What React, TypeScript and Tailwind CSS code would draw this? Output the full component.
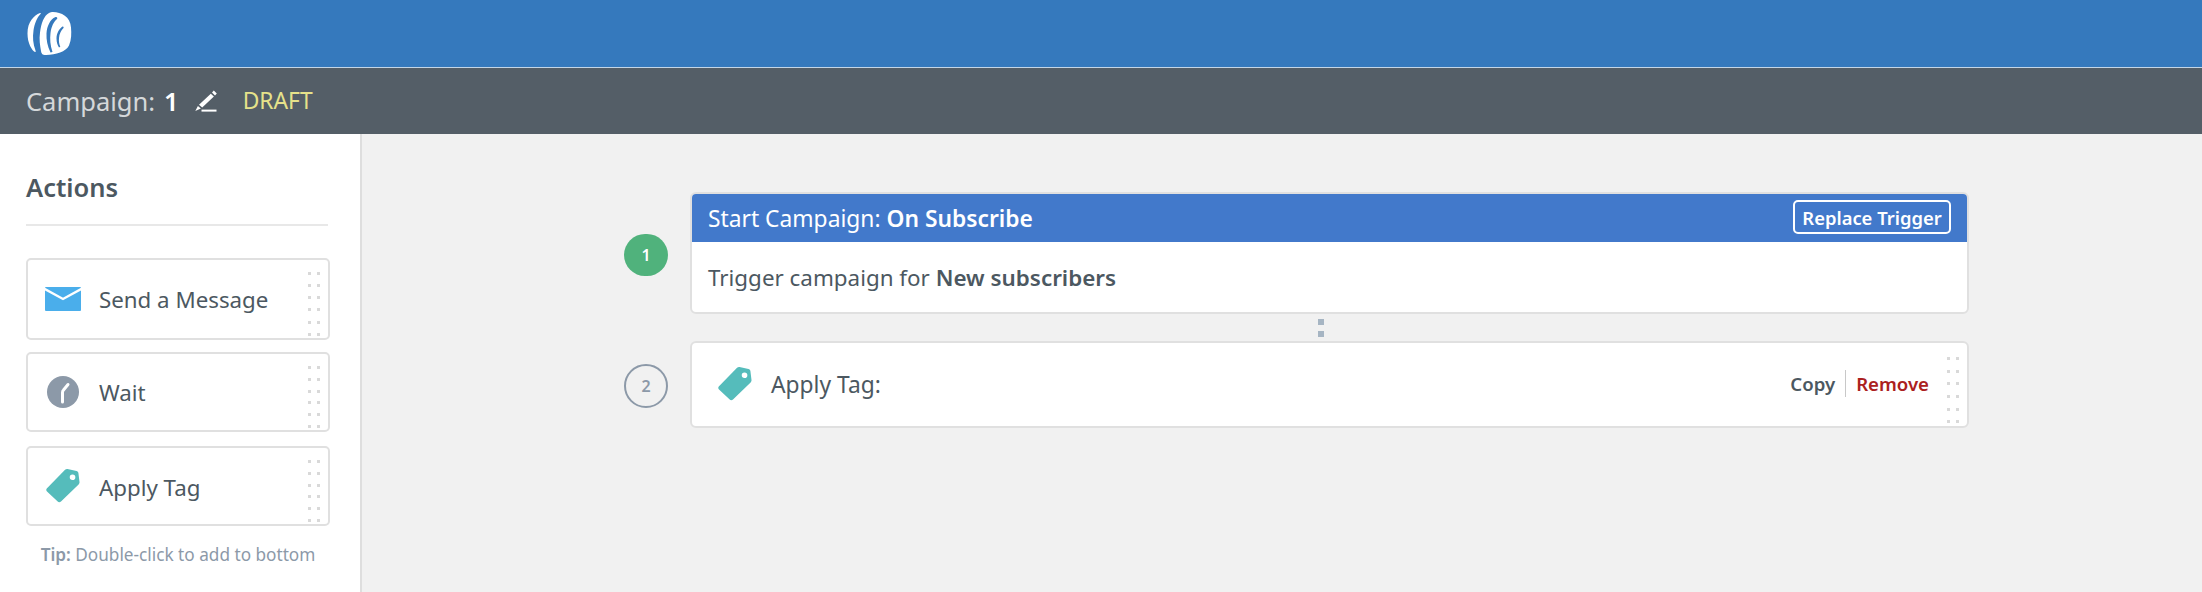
import React from "react";

function Dots({ className = "" }: { className?: string }) {
  return (
    <div className={"grid grid-cols-2 gap-x-[6px] gap-y-[7px] w-[12px] shrink-0 " + className}>
      {Array.from({ length: 12 }).map((_, i) => (
        <div key={i} className="w-[3px] h-[3px] bg-[#d9d9d9]" />
      ))}
    </div>
  );
}

function Logo() {
  return (
    <svg width="46" height="47" viewBox="0 0 46 46" className="block">
      <path d="M14 1.5 C8 4 1.5 10 1.5 22 C1.5 32 6 39 9 40.5 C9.5 40.5 10 40 9.5 39 C7 32 6.5 26 7.5 19 C8.5 12 11 6 14.5 2.5 C15 2 14.8 1.2 14 1.5 Z" fill="#fff" />
      <path fillRule="evenodd" fill="#fff" d="M27 0.5 C35 0.5 44.5 5 45 16 C45.5 22 45.5 28 43 34 C40 40 30 43.5 20 43.5 C16 43.5 15.5 42 15 39.5 C14 34 13 28 14 21 C15 12 18 4 23 1.5 C24.5 0.7 25.5 0.5 27 0.5 Z M29.5 5.5 C24 8 21 14.5 20.5 22 C20.2 28 21.5 35 24.5 41 L26.5 40.5 C24.2 33.5 23.8 27.5 24.5 21.5 C25.4 14.5 28 10 31 7.5 C31.8 6.5 31 5 29.5 5.5 Z M36.5 15 C33 17.5 30.5 22 30.5 27 C30.5 31 31.7 33.7 33 36 L34.3 35.3 C33.2 32.5 32.7 30 33 26.5 C33.3 22.5 35 19 37.5 16.5 C38 15.5 37.3 14.6 36.5 15 Z" />
    </svg>
  );
}

function Pencil() {
  return (
    <svg width="22" height="22" viewBox="0 0 22 22" className="block">
      <path d="M17 2.6 L18.8 0.6 L21.8 3.4 L20 5.4 Z M15.8 3.8 L18.9 6.6 L7.2 17.6 L4 14.8 Z M2.9 16 L5.9 18.6 L0.3 21 Z" fill="#fff" />
      <rect x="6.5" y="19.6" width="15" height="2" fill="#fff" />
    </svg>
  );
}

function Mail() {
  return (
    <svg width="36" height="24" viewBox="0 0 36 24" className="block">
      <rect width="36" height="24" rx="1" fill="#4aaeeb" />
      <path d="M-1 1.5 L18 12 L37 1.5" fill="none" stroke="#fff" strokeWidth="2.4" />
    </svg>
  );
}

function Clock() {
  return (
    <svg width="32" height="32" viewBox="0 0 32 32" className="block">
      <circle cx="16" cy="16" r="16" fill="#8c99a8" />
      <path d="M15.5 26 V16.5 Q15.5 15 16.5 14 L21 8.5" fill="none" stroke="#fff" strokeWidth="3" strokeLinecap="round" strokeLinejoin="round" />
    </svg>
  );
}

function Tag() {
  return (
    <svg width="36" height="36" viewBox="0 0 36 36" className="block">
      <path fillRule="evenodd" fill="#55bcbb" d="M22.5 1 L31.5 3 C32.5 3.2 33.2 4 33.4 5 L34.5 14 C34.6 15 34.2 15.8 33.6 16.4 L16 33.5 C15 34.5 13.5 34.5 12.7 33.6 L2 23.5 C1 22.5 1 21 2 20.2 L19.8 2 C20.5 1.2 21.5 0.9 22.5 1 Z M27.5 6.5 A2.8 2.8 0 1 0 27.6 12.1 A2.8 2.8 0 1 0 27.5 6.5 Z" />
    </svg>
  );
}

function ActionCard({ icon, label, className, labelClass = "" }: { icon: React.ReactNode; label: string; className: string; labelClass?: string }) {
  return (
    <div className={"flex justify-between rounded-[5px] border-2 border-[#e0e0e0] bg-white pr-[8px] pl-[17px] " + className}>
      <div className="flex items-center">
        <div className="w-[36px] flex justify-center">{icon}</div>
        <span className={"ml-[18px] text-[22.3px] text-[#4c5861] " + labelClass}>{label}</span>
      </div>
      <Dots className="mt-[12px]" />
    </div>
  );
}

export default function App() {
  return (
    <div className="w-[2202px] h-[592px] overflow-hidden flex flex-col bg-[#f1f1f1] font-['Noto_Sans','Liberation_Sans',sans-serif] text-[#4c5861]">
      <header className="h-[68px] shrink-0 bg-[#3579bd] border-b border-[#c3d6e8] flex items-center pl-[26px] pt-[2px]">
        <Logo />
      </header>
      <div className="h-[66px] shrink-0 bg-[#545e67] flex items-center pl-[26px]">
        <span className="text-[25.5px] text-[#d5d8da]">Campaign:</span>
        <span className="ml-[9px] text-[25.5px] font-semibold text-white">1</span>
        <div className="ml-[16px]"><Pencil /></div>
        <span className="ml-[26px] text-[22.8px] text-[#e6e28a]">DRAFT</span>
      </div>
      <div className="flex flex-1 min-h-0">
        <aside className="w-[362px] shrink-0 bg-white border-r-2 border-[#dedede] pl-[26px] pr-[30px]">
          <div className="mt-[36px] h-[34px] flex items-center text-[25.5px] font-semibold text-[#4c5861]">Actions</div>
          <div className="mt-[20px] h-[2px] w-[302px] bg-[#e8e8e8]" />
          <div className="mt-[32px] flex flex-col w-[304px]">
            <ActionCard className="h-[82px] mb-[12px]" icon={<Mail />} label="Send a Message" labelClass="pt-[2px]" />
            <ActionCard className="h-[80px] mb-[14px]" icon={<Clock />} label="Wait" labelClass="pt-[2px]" />
            <ActionCard className="h-[80px]" icon={<Tag />} label="Apply Tag" labelClass="pt-[3px]" />
          </div>
          <p className="mt-[16px] w-[304px] text-center text-[17.2px] text-[#8c99a8]">
            <b className="font-semibold">Tip:</b> Double-click to add to bottom
          </p>
        </aside>
        <main className="flex-1 pl-[262px] pt-[58px]">
          <div className="flex items-center gap-[22px]">
            <div className="w-[44px] h-[42px] mt-[4px] rounded-full bg-[#50b27c] text-white text-[16px] font-semibold flex items-center justify-center">1</div>
            <div className="w-[1279px] h-[122px] rounded-[6px] border-2 border-[#e0e0e0] bg-white overflow-hidden">
              <div className="h-[48px] bg-[#4279cb] flex items-center justify-between pl-[16px] pr-[16px] text-white">
                <span className="pt-[2px] text-[22.8px]">Start Campaign: <b className="font-semibold">On Subscribe</b></span>
                <span className="h-[34px] w-[158px] rounded-[5px] border-2 border-white flex items-center justify-center text-[18.4px] font-semibold mb-[2px] pt-[1px]">Replace Trigger</span>
              </div>
              <div className="h-[70px] flex items-center pl-[16px] pt-[2px] text-[22.4px] text-[#4c5861]">
                <span>Trigger campaign for <b className="font-semibold">New subscribers</b></span>
              </div>
            </div>
          </div>
          <div className="w-[1279px] ml-[66px] h-[27px] flex flex-col items-center justify-center gap-[6px] pr-[17px]">
            <div className="w-[6px] h-[6px] bg-[#a6b5c3]" />
            <div className="w-[6px] h-[6px] bg-[#a6b5c3]" />
          </div>
          <div className="flex items-center gap-[22px]">
            <div className="w-[44px] h-[44px] mt-[3px] rounded-full border-2 border-[#8c99a8] text-[#8c99a8] text-[16px] font-semibold flex items-center justify-center">2</div>
            <div className="w-[1279px] h-[87px] rounded-[6px] border-2 border-[#e0e0e0] bg-white flex justify-between pl-[25px] pr-[8px]">
              <div className="flex items-center">
                <div className="mb-[2px]"><Tag /></div>
                <span className="ml-[18px] pt-[2px] text-[22.8px] text-[#4c5861]">Apply Tag:</span>
              </div>
              <div className="flex">
                <div className="flex items-center mb-[2px] text-[18.6px] font-semibold">
                  <span className="text-[#4c5861]">Copy</span>
                  <div className="mx-[10px] w-[1px] h-[27px] bg-[#c8c8c8]" />
                  <span className="text-[#ab2020]">Remove</span>
                </div>
                <Dots className="ml-[18px] mt-[14px]" />
              </div>
            </div>
          </div>
        </main>
      </div>
    </div>
  );
}
